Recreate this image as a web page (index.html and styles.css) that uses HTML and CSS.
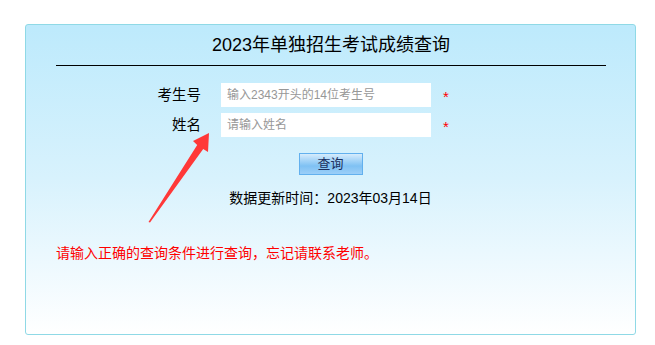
FILE: index.html
```html
<!DOCTYPE html>
<html lang="zh-CN">
<head>
<meta charset="utf-8">
<title>2023年单独招生考试成绩查询</title>
<link rel="stylesheet" href="styles.css">
</head>
<body>
<div class="card">
  <h1 class="title">2023年单独招生考试成绩查询</h1>
  <form class="form" onsubmit="return false">
    <div class="row">
      <label class="label" for="ksh">考生号</label>
      <input class="field" id="ksh" type="text" placeholder="输入2343开头的14位考生号">
      <span class="req">*</span>
    </div>
    <div class="row row2">
      <label class="label" for="xm">姓名</label>
      <input class="field" id="xm" type="text" placeholder="请输入姓名">
      <span class="req">*</span>
    </div>
    <div class="actions">
      <button class="btn" type="submit">查询</button>
    </div>
  </form>
  <p class="updated">数据更新时间：2023年03月14日</p>
  <p class="notice">请输入正确的查询条件进行查询，忘记请联系老师。</p>
  <svg class="arrow" width="100" height="110" viewBox="140 120 100 110" aria-hidden="true">
    <polygon points="209,133 208,152 203.2,149 150,222.5 148.5,222 197.2,145 193,141" fill="#ff3838"/>
  </svg>
</div>
</body>
</html>
```

FILE: styles.css
```css
html, body {
  margin: 0;
  padding: 0;
  background: #ffffff;
}
body {
  padding: 24px 0 0 25px;
  font-family: "Liberation Sans", "Noto Sans CJK SC", sans-serif;
  color: #000;
}
.card {
  position: relative;
  box-sizing: border-box;
  width: 611px;
  height: 311px;
  border: 1px solid #8fd9e6;
  border-radius: 3px;
  background: linear-gradient(to bottom, #bdeafc 0%, #d8f2fd 50%, #ffffff 100%);
  padding: 0 29px 0 30px;
}
.title {
  margin: 0;
  padding: 8px 0 7px;
  font-size: 18px;
  font-weight: normal;
  line-height: 25px;
  text-align: center;
  border-bottom: 1px solid #000;
}
.form {
  margin: 17px 0 0;
}
.row {
  display: flex;
  align-items: center;
  height: 24px;
}
.row2 {
  margin-top: 6px;
}
.label {
  width: 145px;
  text-align: right;
  font-size: 14.5px;
  line-height: 24px;
  margin-right: 20px;
}
.field {
  box-sizing: border-box;
  width: 210px;
  height: 24px;
  border: 0;
  margin: 0;
  padding: 0 6px;
  background: #ffffff;
  font-family: "Liberation Sans", "Noto Sans CJK SC", sans-serif;
  font-size: 12px;
  color: #333;
  outline: none;
}
.field::placeholder {
  font-family: "Liberation Sans", "Noto Sans CJK SC", sans-serif;
  color: #979797;
}
.req {
  margin-left: 12px;
  padding-top: 4px;
  color: #ff0000;
  font-family: "Liberation Sans", sans-serif;
  font-size: 15px;
  line-height: 18px;
}
.actions {
  display: flex;
  justify-content: center;
  margin-top: 16px;
  padding-right: 1px;
}
.btn {
  box-sizing: border-box;
  width: 64px;
  height: 22px;
  margin: 0;
  padding: 0;
  border: 1px solid #62b0ee;
  background: linear-gradient(to bottom, #d6ecfc 0%, #a9d6f8 30%, #7fc1f3 60%, #9ccff8 100%);
  color: #1b2f5c;
  font-family: "Liberation Sans", "Noto Sans CJK SC", sans-serif;
  font-size: 13px;
  line-height: 20px;
  cursor: pointer;
}
.updated {
  margin: 13px 0 0;
  font-size: 14px;
  line-height: 20px;
  text-align: center;
  padding-right: 1px;
}
.notice {
  margin: 35px 0 0;
  font-size: 14px;
  line-height: 20px;
  color: #ff0000;
}
.arrow {
  position: absolute;
  left: 114px;
  top: 95px;
}
```
